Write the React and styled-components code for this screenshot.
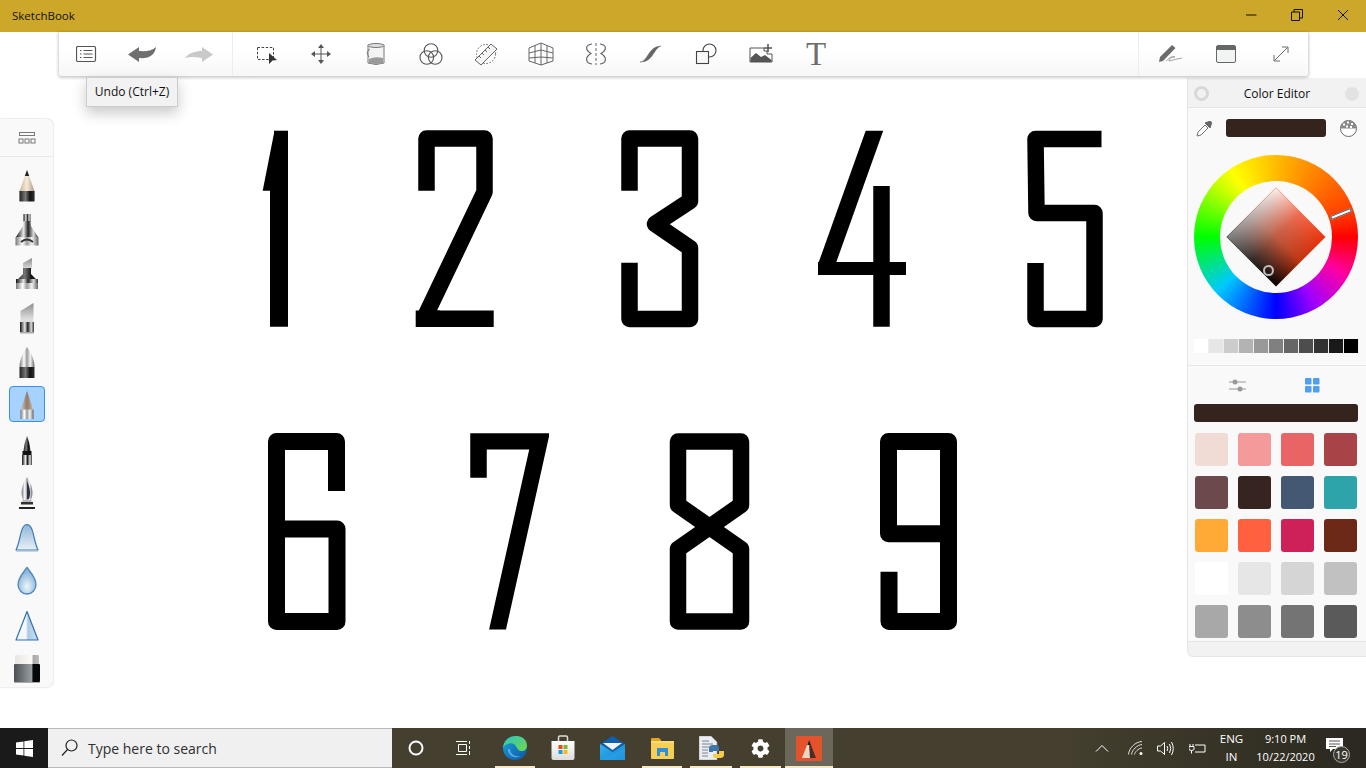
import React from 'react';
import styled, { createGlobalStyle } from 'styled-components';
import { FaCog } from 'react-icons/fa';

const Global = createGlobalStyle`
  html, body { margin: 0; padding: 0; background: #fff; overflow: hidden; }
  * { box-sizing: border-box; }
  body { font-family: "Open Sans", "Noto Sans", sans-serif; }
`;

const Page = styled.div`
  width: 1366px; height: 768px; display: flex; flex-direction: column; overflow: hidden; background: #fff;
`;

const TitleBar = styled.header`
  height: 32px; flex: none; background: #cca729; display: flex; align-items: center; padding: 0 0 2px 12px; color: #111; font-size: 11.5px;
`;
const AppTitle = styled.span`flex: 1;`;
const WinButton = styled.div`
  width: 46px; height: 30px; display: flex; align-items: center; justify-content: center; color: #111;
`;

const Workspace = styled.main`
  flex: 1; min-height: 0; display: grid; grid-template-columns: 53px 1fr 179px; grid-template-rows: 44px 1fr; position: relative;
`;

const ToolBar = styled.nav`
  grid-column: 1 / -1; margin: 0 58px 0 59px; position: relative; z-index: 3; display: flex; align-items: center;
  background: linear-gradient(#ffffff 40%, #f7f7f7); box-shadow: 0 1px 3px 1px rgba(0,0,0,.2); border-radius: 0 0 3px 3px;
`;
const ToolGroup = styled.div`
  display: flex; align-items: center; height: 100%; padding: ${p => p.$pad}; gap: ${p => p.$gap}px;
  border-left: ${p => p.$sep ? '1px solid #ededed' : 'none'};
  flex: ${p => p.$grow ? 1 : 'none'};
`;
const ToolSlot = styled.div`
  width: ${p => p.$w || 30}px; height: 30px; display: flex; align-items: center; justify-content: center; color: #555; flex: none;
`;
const TypeGlyph = styled.span`
  font-family: "Liberation Serif", serif; font-size: 33px; line-height: 30px; color: #6e6e6e;
`;
const Tooltip = styled.div`
  position: absolute; left: 27px; top: 45px; width: 92px; height: 30px; background: #f2f2f2; border: 1px solid #ccc; color: #111;
  font-size: 12px; padding-bottom: 2px; display: flex; align-items: center; justify-content: center; box-shadow: 0 6px 14px rgba(0,0,0,.22);
`;

const Palette = styled.aside`
  grid-column: 1; grid-row: 2; margin-top: 43px; height: 568px; background: #f9f9f9; border-radius: 0 6px 6px 0;
  box-shadow: 0 0 2px rgba(0,0,0,.25); display: flex; flex-direction: column; align-items: center; position: relative; z-index: 2;
`;
const PaletteHead = styled.div`
  width: 100%; height: 38px; flex: none; border-bottom: 1px solid #e9e9e9; display: flex; align-items: center; justify-content: center; margin-bottom: 7px;
`;
const BrushButton = styled.div`
  width: 36px; height: 36px; flex: none; display: flex; align-items: center; justify-content: center;
  margin: ${p => p.$sel ? '2px 0 6px' : '4px 0'};
  background: ${p => p.$sel ? '#a6d2ff' : 'transparent'};
  border: ${p => p.$sel ? '1px solid #3a8fe8' : 'none'}; border-radius: 4px;
`;

const CanvasArea = styled.svg`
  grid-column: 2; grid-row: 2; width: 1134px; height: 652px; display: block;
`;

const Panel = styled.aside`
  grid-column: 3; grid-row: 2; margin-top: 2px; height: 579px; background: #f9f9f9; border-left: 1px solid #e6e6e6; border-bottom: 1px solid #e6e6e6;
  border-radius: 0 0 0 6px; display: flex; flex-direction: column; position: relative; z-index: 2;
`;
const PanelHead = styled.div`
  height: 30px; flex: none; background: #f2f2f2; border-bottom: 1px solid #e6e6e6; display: flex; align-items: center; justify-content: space-between; padding: 2px 7px 0 6px; font-size: 12px; color: #111;
`;
const HeadRing = styled.div`
  width: 15px; height: 15px; border-radius: 50%; border: 3px solid #d8d8d8;
`;
const HeadDot = styled.div`
  width: 14px; height: 14px; border-radius: 50%; background: #e3e3e3;
`;
const ColorRow = styled.div`
  display: flex; align-items: center; margin-top: 11px; height: 18px; padding-left: 8px; gap: 14px;
`;
const CurrentColor = styled.div`
  width: 100px; height: 18px; background: #35241e; border-radius: 3px; margin-left: -1px;
`;
const Wheel = styled.div`
  width: 164px; height: 164px; margin: 18px 0 0 6px; flex: none; position: relative; border-radius: 50%;
  background: conic-gradient(from 90deg, #ff0000 0deg, #ff00a0 28deg, #a000ff 60deg, #0000ff 90deg, #00c8ff 137deg, #00ff00 180deg, #c8ff00 222deg, #ffff00 236deg, #ffa800 280deg, #ff4000 340deg, #ff0000 360deg);
`;
const WheelHole = styled.div`
  position: absolute; inset: 26px; border-radius: 50%; background: #f9f9f9;
`;
const Diamond = styled.div`
  position: absolute; left: 47px; top: 47px; width: 70px; height: 70px; transform: rotate(45deg);
  background: linear-gradient(#f0340c, #c03410 50%, #000);
  &::after { content: ''; position: absolute; inset: 0; background: linear-gradient(#fbf4f2, #808080);
    -webkit-mask-image: linear-gradient(to right, #000, rgba(0,0,0,.3) 50%, transparent);
    mask-image: linear-gradient(to right, #000, rgba(0,0,0,.3) 50%, transparent); }
`;
const HueMark = styled.div`
  position: absolute; left: 136px; top: 57px; width: 22px; height: 4px; background: #fff; border: 1px solid #555; transform: rotate(-22deg);
`;
const PickMark = styled.div`
  position: absolute; left: 69px; top: 110px; width: 11px; height: 11px; border-radius: 50%; border: 2px solid #bdbdbd;
`;
const GrayStrip = styled.div`
  display: flex; margin: 20px 0 0 6px; height: 14px; width: 165px; flex: none; background: #eee;
`;
const GrayCell = styled.div`
  flex: 1; background: ${p => p.$c}; margin-right: 1px;
`;
const Divider = styled.div`
  height: 1px; background: #e6e6e6; margin-top: 12px; flex: none;
`;
const TabRow = styled.div`
  height: 38px; flex: none; display: flex; align-items: center; padding-left: 41px; gap: 58px;
`;
const ActiveBar = styled.div`
  width: 164px; height: 18px; margin-left: 6px; background: #35241e; border-radius: 3px; flex: none;
`;
const SwatchGrid = styled.div`
  display: grid; grid-template-columns: repeat(4, 33px); gap: 10px; margin: 11px 0 0 7px;
`;
const Swatch = styled.div`
  height: 33px; border-radius: 3px; background: ${p => p.$c};
`;
const PanelFoot = styled.div`
  margin-top: auto; height: 15px; background: #f2f2f2; border-top: 1px solid #e6e6e6; border-radius: 0 0 0 6px;
`;

const TaskBar = styled.footer`
  height: 40px; flex: none; background: #443f2e; display: flex; align-items: stretch; color: #fff; position: relative;
  background-image: linear-gradient(to right, #443f2e 78%, #2a2820 100%);
`;
const StartButton = styled.div`
  width: 48px; background: #1a1a1a; display: flex; align-items: center; justify-content: center;
`;
const SearchBox = styled.div`
  width: 344px; background: #f0f0f0; border: 1px solid #b9b9b9; border-width: 1px 0; color: #2f2f2f; display: flex; align-items: center; gap: 10px; padding-left: 13px; font-size: 14px;
`;
const TaskSlot = styled.div`
  width: ${p => p.$w || 48}px; flex: none; display: flex; align-items: center; justify-content: center; position: relative;
  background: ${p => p.$active ? '#6b675a' : 'transparent'};
  &::after { content: ''; display: ${p => p.$line ? 'block' : 'none'}; position: absolute; left: ${p => p.$active ? 0 : 4}px; right: ${p => p.$active ? 0 : 4}px; bottom: 0; height: 2px; background: #f5e8c4; }
`;
const TaskGroup = styled.div`
  display: flex; flex: none; margin-left: ${p => p.$ml || 0}px;
`;
const Tray = styled.div`
  margin-left: auto; display: flex; align-items: center; font-size: 11.5px; line-height: 18px; text-align: center; flex: none; padding-right: 14px;
`;
const TraySlot = styled.div`
  width: ${p => p.$w}px; flex: none; display: flex; align-items: center; justify-content: center; flex-direction: column; position: relative; height: 40px;
  font-size: ${p => p.$fs || 11.5}px; white-space: nowrap;
`;
const NoteIcon = styled.svg`
  margin-top: -6px;
`;
const NoteBadge = styled.div`
  position: absolute; right: 2px; bottom: 5px; width: 17px; height: 17px; border-radius: 50%; background: #3c3a30; border: 1px solid #aaa; font-size: 11px; line-height: 15px; color: #fff; text-align: center;
`;
const HiddenDefs = styled.svg`
  position: absolute; width: 0; height: 0;
`;

const Defs = () => (
  <HiddenDefs aria-hidden="true">
    <defs>
      <linearGradient id="silver" x1="0" x2="1" y1="0" y2="0">
        <stop offset="0" stopColor="#777" /><stop offset=".3" stopColor="#fff" /><stop offset=".5" stopColor="#999" /><stop offset=".72" stopColor="#f4f4f4" /><stop offset="1" stopColor="#666" />
      </linearGradient>
      <linearGradient id="metal" x1="0" x2="1" y1="0" y2="0">
        <stop offset="0" stopColor="#111" /><stop offset=".35" stopColor="#e8e8e8" /><stop offset=".55" stopColor="#222" /><stop offset=".8" stopColor="#ddd" /><stop offset="1" stopColor="#333" />
      </linearGradient>
      <linearGradient id="black" x1="0" x2="1" y1="0" y2="0">
        <stop offset="0" stopColor="#222" /><stop offset=".4" stopColor="#777" /><stop offset=".7" stopColor="#111" /><stop offset="1" stopColor="#333" />
      </linearGradient>
      <linearGradient id="wood" x1="0" x2="1" y1="0" y2="0">
        <stop offset="0" stopColor="#c9b79c" /><stop offset=".5" stopColor="#f5ead8" /><stop offset="1" stopColor="#ad9a80" />
      </linearGradient>
      <linearGradient id="tan" x1="0" x2="1" y1="0" y2="0">
        <stop offset="0" stopColor="#d8c4ae" /><stop offset=".5" stopColor="#8d7d70" /><stop offset="1" stopColor="#c9b5a0" />
      </linearGradient>
      <linearGradient id="chisel" x1="0" x2="0" y1="0" y2="1">
        <stop offset="0" stopColor="#8c8c8c" /><stop offset="1" stopColor="#dedede" />
      </linearGradient>
      <linearGradient id="blueV" x1="0" x2="0" y1="0" y2="1">
        <stop offset="0" stopColor="#8fb6d8" /><stop offset="1" stopColor="#e8f0f7" />
      </linearGradient>
      <linearGradient id="blueH" x1="0" x2="1" y1="0" y2="0">
        <stop offset=".45" stopColor="#f4f8fb" /><stop offset=".55" stopColor="#a9cbe2" /><stop offset="1" stopColor="#cfe2ef" />
      </linearGradient>
      <radialGradient id="drop" cx=".5" cy=".72" r=".55">
        <stop offset="0" stopColor="#eef5fa" /><stop offset="1" stopColor="#8db8d8" />
      </radialGradient>
      <linearGradient id="eraserBody" x1="0" x2="1" y1="0" y2="0">
        <stop offset="0" stopColor="#4a5055" /><stop offset=".7" stopColor="#9aa0a4" /><stop offset=".72" stopColor="#05080c" /><stop offset="1" stopColor="#05080c" />
      </linearGradient>
      <linearGradient id="eraserTop" x1="0" x2="1" y1="0" y2="0">
        <stop offset="0" stopColor="#e8e6e0" /><stop offset=".72" stopColor="#fbfbf9" /><stop offset=".74" stopColor="#a8a8a8" /><stop offset="1" stopColor="#bbb" />
      </linearGradient>
      <linearGradient id="edgeB" x1="0" x2="1" y1="0" y2="1">
        <stop offset="0" stopColor="#1aa4d8" /><stop offset="1" stopColor="#0c55a8" />
      </linearGradient>
      <linearGradient id="edgeG" x1="0" x2="1" y1="0" y2="1">
        <stop offset="0" stopColor="#2fc5c0" /><stop offset="1" stopColor="#6fd84a" />
      </linearGradient>
      <linearGradient id="bagG" x1="0" x2="0" y1="0" y2="1">
        <stop offset="0" stopColor="#fff" /><stop offset="1" stopColor="#dcdcdc" />
      </linearGradient>
      <linearGradient id="mailG" x1="0" x2="1" y1="0" y2="1">
        <stop offset="0" stopColor="#35b5f0" /><stop offset="1" stopColor="#0e7fd0" />
      </linearGradient>
    </defs>
  </HiddenDefs>
);

const BrushSvg = ({ children }) => <svg width="36" height="40" viewBox="0 0 36 40">{children}</svg>;

const brushes = [
  <BrushSvg key="1"><path d="M18 4 L10.5 25 V35 H25.5 V25Z" fill="url(#wood)" /><path d="M18 4 L15.8 10 H20.2Z" fill="#222" /><rect x="10.5" y="25" width="15" height="10.5" fill="url(#black)" /></BrushSvg>,
  <BrushSvg key="2"><rect x="14.5" y="4" width="7" height="8" fill="url(#metal)" /><path d="M14.5 11 L14 16 L7 27 V35 H29 V27 L22 16 L21.5 11Z" fill="url(#metal)" /><rect x="6.5" y="27" width="23" height="8.5" fill="url(#silver)" /><path d="M12 32 q6 -5 12 0" stroke="#333" strokeWidth="2" fill="none" /></BrushSvg>,
  <BrushSvg key="3"><path d="M14 9 L23 4 V15 H14Z" fill="url(#chisel)" /><path d="M14 14 H22 V20 L29 27 H7 L14 20Z" fill="url(#black)" /><rect x="7" y="25" width="22" height="4" fill="url(#metal)" /><rect x="7" y="29" width="22" height="6" fill="url(#silver)" /></BrushSvg>,
  <BrushSvg key="4"><path d="M11.5 13 L24.5 5 V21 H11.5Z" fill="url(#chisel)" /><rect x="11.5" y="21" width="13" height="3" fill="#ddd" /><rect x="11" y="24" width="14" height="10" fill="url(#metal)" /><rect x="11" y="34" width="14" height="1.5" fill="#aaa" /></BrushSvg>,
  <BrushSvg key="5"><path d="M18 5 C15 9 10.5 17 10.5 25 H25.5 C25.5 17 21 9 18 5Z" fill="url(#silver)" /><rect x="10.5" y="25" width="15" height="11" fill="url(#black)" /></BrushSvg>,
  <BrushSvg key="6"><path d="M18 6 L11.5 26 H24.5Z" fill="url(#tan)" /><rect x="11" y="26" width="14" height="10" fill="url(#silver)" /></BrushSvg>,
  <BrushSvg key="7"><path d="M18 6 C16 11 15 16 14.5 21 H21.5 C21 16 20 11 18 6Z" fill="url(#black)" /><rect x="13.5" y="21" width="9" height="4" fill="#111" /><rect x="13" y="25" width="10" height="10" fill="url(#metal)" /></BrushSvg>,
  <BrushSvg key="8"><path d="M18 3 C13 10 11 19 14 26 H22 C25 19 23 10 18 3Z" fill="url(#silver)" /><path d="M18 7 C21 13 22 20 20 25 H18Z" fill="#2c3346" /><rect x="12" y="28" width="12" height="2.5" fill="#333" /><rect x="13.5" y="26" width="9" height="2" fill="#bbb" /><path d="M10 33 H26 V35 H10Z" fill="#222" /></BrushSvg>,
  <BrushSvg key="9"><path d="M7 32 C12 22 11 7 18 6.5 C25 7 24 22 29 32Z" fill="url(#blueV)" stroke="#3f7cbd" strokeWidth="1.2" strokeLinejoin="round" /><path d="M7 33 H29" stroke="#9fb4c8" strokeWidth="1" /></BrushSvg>,
  <BrushSvg key="10"><path d="M18 5.5 C22 11 27 16 27 22.5 A9 9.5 0 0 1 9 22.5 C9 16 14 11 18 5.5Z" fill="url(#drop)" stroke="#4c86c3" strokeWidth="1.3" /></BrushSvg>,
  <BrushSvg key="11"><path d="M18 5.5 L7 34 H29Z" fill="url(#blueH)" stroke="#2f6fb5" strokeWidth="1.2" strokeLinejoin="round" /></BrushSvg>,
  <BrushSvg key="12"><rect x="6" y="5" width="24" height="12" rx="1" fill="url(#eraserTop)" /><rect x="5" y="14" width="26" height="18" rx="1" fill="url(#eraserBody)" /><rect x="5" y="32" width="26" height="1" fill="#aaa" /></BrushSvg>,
];

const grays = ['#ffffff','#e6e6e6','#cccccc','#b3b3b3','#999999','#808080','#666666','#4d4d4d','#333333','#1a1a1a','#000000'];
const swatches = ['#f0dcd4','#f59a9a','#e96465','#a84447','#6b494c','#35241f','#445874','#2da4aa','#ffaa37','#ff6040','#cf2159','#6c2918','#ffffff','#e6e6e6','#d5d5d5','#c1c1c1','#a8a8a8','#8d8d8d','#747474','#5a5a5a'];

const Sketch = () => (
  <CanvasArea viewBox="53 76 1134 652">
    <defs>
      <clipPath id="clip7"><rect x="469.7" y="433.3" width="79.3" height="196.2" /></clipPath>
      <clipPath id="clip2"><rect x="415.7" y="130" width="78" height="197" /></clipPath>
      <clipPath id="clip4"><rect x="818" y="130.7" width="88" height="145" /></clipPath>
    </defs>
    <g fill="none" stroke="#000" strokeLinejoin="round">
      <path d="M279 326.7 V190" strokeWidth="18" />
      <path d="M281 190.7 V130.7" strokeWidth="14" />
      <path d="M274.5 130.7 L262.7 190.7 H275Z" fill="#000" stroke="none" />
      <g clipPath="url(#clip2)" strokeWidth="16.5">
        <path d="M426.5 190.7 V138.5 H484.5 V192 L424 318.7 H494" />
        <path d="M415 318.7 H440" />
      </g>
      <path d="M629.5 190.7 V138.5 H690 V201 L655 224 L690 248 V319 H629.5 V262.7" strokeWidth="16.5" />
      <g strokeWidth="16.5">
        <g clipPath="url(#clip4)"><path d="M876.5 125 L824 272" /></g>
        <path d="M818 268.5 H906" strokeWidth="13" />
        <path d="M881.5 326.7 V186" />
      </g>
      <path d="M1101.5 139 H1035.5 L1036.5 213 H1094.5 V319 H1035.5 V263" strokeWidth="16.5" />
      <path d="M336.5 491 V441.5 H276.5 V621.5 H337 V529 H276.5" strokeWidth="17" />
      <g clipPath="url(#clip7)" strokeWidth="16.5" strokeLinejoin="miter" strokeMiterlimit="8">
        <path d="M478.5 477.7 V441.2 H539.5 L497 632" />
      </g>
      <path d="M678 505 V441.5 H741 V505 L678 549 V621.5 H741 V549Z" strokeWidth="16.5" />
      <path d="M948.5 533.7 H888.5 V441.5 H948.5 V621.5 H889 V571.7" strokeWidth="17" />
    </g>
  </CanvasArea>
);

const Stroke = { fill: 'none', stroke: 'currentColor', strokeWidth: 1.2 };

const App = () => (
  <Page>
    <Global />
    <Defs />
    <TitleBar>
      <AppTitle>SketchBook</AppTitle>
      <WinButton><svg width="11" height="2"><path d="M0 1H10.5" stroke="#111" /></svg></WinButton>
      <WinButton><svg width="12" height="12" fill="none" stroke="#111"><path d="M.5 3H8.5V11.5H.5Z M3 3V.5H11.5V9H8.5" /></svg></WinButton>
      <WinButton><svg width="12" height="12" stroke="#111"><path d="M1 1L11 11M11 1L1 11" /></svg></WinButton>
    </TitleBar>

    <Workspace>
      <ToolBar>
        <ToolGroup $pad="0 19px 0 12px" $gap={26}>
          <ToolSlot><svg width="21" height="17"><rect x=".5" y=".5" width="19" height="15" rx="1.5" {...Stroke} stroke="#555" /><path d="M4 4.5H5.5M4 8H5.5M4 11.5H5.5M7.5 4.5H16.5M7.5 8H16.5M7.5 11.5H16.5" stroke="#555" strokeWidth="1.1" /></svg></ToolSlot>
          <ToolSlot><svg width="29" height="17"><path d="M0 8.5 L11 1 V5 C18 5.5 24 5 28 1 C27 9 21 13 11 12 V16Z" fill="#6f6f6f" /></svg></ToolSlot>
          <ToolSlot><svg width="29" height="17"><path d="M29 8.5 L18 1 V5 C11 5 5 7 1 12 C6 10.5 12 11 18 12 V16Z" fill="#c9c9c9" /></svg></ToolSlot>
        </ToolGroup>
        <ToolGroup $sep $grow $pad="0 0 0 18px" $gap={25}>
          <ToolSlot><svg width="24" height="22"><rect x="3.5" y="4.5" width="16" height="12" fill="none" stroke="#444" strokeDasharray="2.5 1.6" /><path d="M15 10 L23 17 L18.5 17.5 L15 21Z" fill="#333" /></svg></ToolSlot>
          <ToolSlot><svg width="22" height="22" fill="#555" stroke="#555"><path d="M11 4V18M4 11H18" strokeWidth="1" /><path d="M11 1L8 5H14ZM11 21L8 17H14ZM1 11L5 8V14ZM21 11L17 8V14Z" stroke="none" /></svg></ToolSlot>
          <ToolSlot><svg width="20" height="24"><path d="M2 3 H18 V21 Q10 24 2 21Z" fill="#f4f4f4" stroke="#777" /><ellipse cx="10" cy="3.5" rx="8" ry="2" fill="#ddd" stroke="#777" /><path d="M3 21 V17 Q9 14 17 16 V21 Q10 23 3 21Z" fill="#9a9a9a" /><path d="M3 15 Q-1 10 4 7" fill="none" stroke="#777" /></svg></ToolSlot>
          <ToolSlot><svg width="24" height="24" fill="none" stroke="#555" strokeWidth="1.1"><circle cx="12" cy="8.5" r="6.8" /><circle cx="7.8" cy="15.5" r="6.8" /><circle cx="16.2" cy="15.5" r="6.8" /></svg></ToolSlot>
          <ToolSlot><svg width="24" height="24" fill="none" stroke="#666"><circle cx="12" cy="12" r="9.5" strokeDasharray="1.6 1.6" /><path d="M1 18 L17 2 L23 7 L7 23Z" fill="#f4f4f4" /><path d="M5 14l2 2M8 11l2 2M11 8l2 2M14 5l2 2" /></svg></ToolSlot>
          <ToolSlot><svg width="26" height="24" fill="none" stroke="#666" strokeWidth="1"><path d="M13 1 L25 6 V19 L13 23 L1 19 V6Z M13 1V23 M7 3.5V21 M19 3.5V21 M1 11 L13 8 L25 11 M1 16 L13 15 L25 16" /></svg></ToolSlot>
          <ToolSlot><svg width="24" height="24" fill="none" stroke="#666"><path d="M12 1V23" strokeDasharray="3 2" /><path d="M8 2 C1 3 1 8 7 11.5 C1 15 1 21 8 22" strokeWidth="1.2" /><path d="M16 2 C23 3 23 8 17 11.5 C23 15 23 21 16 22" strokeWidth="1.2" /></svg></ToolSlot>
          <ToolSlot><svg width="22" height="18"><path d="M0 17 C8 17 8 1 21 1 C14 3 13 17 1 17Z" fill="#666" stroke="#666" strokeWidth=".4" /></svg></ToolSlot>
          <ToolSlot><svg width="22" height="22" fill="none" stroke="#444" strokeWidth="1.1"><circle cx="14.5" cy="7.5" r="6.5" /><rect x="1.5" y="8.5" width="12" height="12" fill="#f8f8f8" /></svg></ToolSlot>
          <ToolSlot><svg width="24" height="22"><path d="M1 5 H15 V8 H18 V11 H23 V19 H1Z" fill="#fff" stroke="#555" strokeWidth="1" /><path d="M1.5 19 V15 L7 10 L12 14 L16 12 L22.5 17 V19Z" fill="#555" /><path d="M19 1V9M15 5H23" stroke="#555" strokeWidth="1.6" /></svg></ToolSlot>
          <ToolSlot><TypeGlyph>T</TypeGlyph></ToolSlot>
        </ToolGroup>
        <ToolGroup $sep $pad="0 12px 0 17px" $gap={25}>
          <ToolSlot><svg width="26" height="20"><path d="M1 18 L2 13 L14 1 L17.5 4 L5 17Z" fill="#6c6c6c" /><path d="M8 17 Q14 11 17 13 Q11 13 11 17 Q18 15 24 14" fill="none" stroke="#999" strokeWidth=".9" /></svg></ToolSlot>
          <ToolSlot><svg width="20" height="18"><rect x=".5" y=".5" width="19" height="17" rx="1.5" fill="#f2f4f4" stroke="#666" /><path d="M1 1H19V5H1Z" fill="#666" /></svg></ToolSlot>
          <ToolSlot><svg width="16" height="16" fill="none" stroke="#6a6a6a"><path d="M1 9V15H7M15 7V1H9M1.5 14.5L14.5 1.5" /></svg></ToolSlot>
        </ToolGroup>
        <Tooltip>Undo (Ctrl+Z)</Tooltip>
      </ToolBar>

      <Palette>
        <PaletteHead>
          <svg width="18" height="13" fill="none" stroke="#777"><rect x="1.5" y="1.5" width="15" height="3" /><rect x="1" y="8" width="4" height="4" /><rect x="7" y="8" width="4" height="4" /><rect x="13" y="8" width="4" height="4" /></svg>
        </PaletteHead>
        {brushes.map((b, i) => <BrushButton key={i} $sel={i === 5}>{b}</BrushButton>)}
      </Palette>

      <Sketch />

      <Panel>
        <PanelHead><HeadRing />Color Editor<HeadDot /></PanelHead>
        <ColorRow>
          <svg width="17" height="17" fill="none" stroke="#777"><path d="M1 16 L2 12 L9 5 L12 8 L5 15Z" fill="#fbfbfb" /><path d="M9 3 L14 8 L15 5 Q17 1 13 1.5Z" fill="#666" stroke="#666" /></svg>
          <CurrentColor />
          <svg width="17" height="17"><circle cx="8.5" cy="8.5" r="8" fill="#fff" stroke="#666" /><path d="M.5 8.5 A8 8 0 0 1 16.5 8.5Z" fill="#888" /><path d="M3 3.5h2v2H3zM7 1.5h2v2H7zM11 3h2v2h-2zM6 5.5h2v2H6zM10 6h2v2h-2z" fill="#fff" /></svg>
        </ColorRow>
        <Wheel>
          <WheelHole />
          <Diamond />
          <HueMark />
          <PickMark />
        </Wheel>
        <GrayStrip>{grays.map(c => <GrayCell key={c} $c={c} />)}</GrayStrip>
        <Divider />
        <TabRow>
          <svg width="18" height="13" fill="#9a9a9a" stroke="#9a9a9a"><path d="M0 3H17M0 10H17" strokeWidth="1" /><circle cx="6" cy="3" r="2.5" stroke="none" /><circle cx="11" cy="10" r="2.5" stroke="none" /></svg>
          <svg width="15" height="15" fill="#4f9fee"><rect width="6.5" height="6.5" rx=".8" /><rect x="8" width="6.5" height="6.5" rx=".8" /><rect y="8" width="6.5" height="6.5" rx=".8" /><rect x="8" y="8" width="6.5" height="6.5" rx=".8" /></svg>
        </TabRow>
        <ActiveBar />
        <SwatchGrid>{swatches.map((c, i) => <Swatch key={i} $c={c} />)}</SwatchGrid>
        <PanelFoot />
      </Panel>
    </Workspace>

    <TaskBar>
      <StartButton>
        <svg width="17" height="17" fill="#fff"><path d="M0 2.5L7.5 1.4V8H0ZM8.3 1.3L17 0V8H8.3ZM0 9H7.5V15.6L0 14.5ZM8.3 9H17V17L8.3 15.7Z" /></svg>
      </StartButton>
      <SearchBox>
        <svg width="17" height="18" fill="none" stroke="#222" strokeWidth="1.2"><circle cx="10.5" cy="6.5" r="5.5" /><path d="M6.5 10.5L1 16.5" /></svg>
        Type here to search
      </SearchBox>
      <TaskGroup>
        <TaskSlot><svg width="16" height="16" fill="none" stroke="#fff" strokeWidth="2"><circle cx="8" cy="8" r="6.5" /></svg></TaskSlot>
        <TaskSlot><svg width="16" height="14" fill="none" stroke="#fff"><path d="M0 .5H11M0 13.5H11M2.5 3.5H10.5V10.5H2.5ZM13.5 0V3M13.5 5V8M13.5 10V14" /></svg></TaskSlot>
      </TaskGroup>
      <TaskGroup $ml={3}>
        <TaskSlot $line><svg width="26" height="26"><circle cx="13" cy="13" r="12" fill="url(#edgeB)" /><path d="M1 13 C2 3 13 -2 21 3 C26 6 26.5 15 21 16 C15 17 15 11 12 9 C7 7 2 10 1 13Z" fill="url(#edgeG)" /><path d="M8 14 C8 20 14 22 19 21 C14 24 6 22 6 14 Z" fill="#8ad0ef" opacity=".6" /></svg></TaskSlot>
        <TaskSlot><svg width="24" height="26"><path d="M7.5 6 V2.5 Q7.5 1 9 1 H15 Q16.5 1 16.5 2.5 V6" fill="none" stroke="#ddd" strokeWidth="1.5" /><path d="M.5 6 H23.5 V23 Q23.5 25 21.5 25 H2.5 Q.5 25 .5 23Z" fill="url(#bagG)" /><rect x="7.5" y="10" width="4" height="4" fill="#e8491f" /><rect x="12.5" y="10" width="4" height="4" fill="#7ab92c" /><rect x="7.5" y="15" width="4" height="4" fill="#1a9fe5" /><rect x="12.5" y="15" width="4" height="4" fill="#fdb813" /></svg></TaskSlot>
        <TaskSlot $w={51}><svg width="25" height="24"><path d="M12.5 0 L25 8 L12.5 16 L0 8Z" fill="#0d5fb0" /><path d="M3 7 H22 L12.5 14Z" fill="#f4f4f4" /><path d="M0 8 L12.5 16 L25 8 V24 H0Z" fill="url(#mailG)" /><path d="M0 24 L25 12 V24Z" fill="#2ba4ea" opacity=".6" /></svg></TaskSlot>
        <TaskSlot $line><svg width="23" height="21"><path d="M0 1 Q0 0 1 0 H8 L10 2 V6 H0Z" fill="#e4a51e" /><rect y="3" width="23" height="18" rx="1" fill="#f7cf55" /><path d="M0 3 H23 V5 H0Z" fill="#f9db7a" /><rect x="6" y="10" width="11" height="8" fill="#2f8fd8" /><rect x="9" y="14" width="5" height="5" fill="#f7cf55" /></svg></TaskSlot>
        <TaskSlot $line $w={50}><svg width="25" height="24"><path d="M0 0 H12 L18 6 V24 H0Z" fill="#e9edf2" stroke="#9aa0a8" strokeWidth=".6" /><path d="M3 5H10M3 8H14M3 11H10M3 14H9M3 17H9M3 20H9" stroke="#7c8390" /><path d="M10 16 V12 Q10 9 14 9 H17 Q20 9 20 12 V15 H14 V16Z" fill="#3f76a8" /><path d="M25 15 V19 Q25 22 21 22 H17 Q14 22 14 20 V18 H20 V15Z" fill="#f5cc4a" /></svg></TaskSlot>
        <TaskSlot $line $w={49}><FaCog size={19} color="#fff" /></TaskSlot>
        <TaskSlot $line $active $w={48}><svg width="26" height="25"><rect width="26" height="25" fill="#e5532d" /><path d="M13 4 L6 22 H14Z" fill="#ecd8c8" /><path d="M13 4 L20 22 H14Z" fill="#4a2c24" /><path d="M13 4 L11.2 9 H14.8Z" fill="#222" /></svg></TaskSlot>
      </TaskGroup>
      <Tray>
        <TraySlot $w={51}><svg width="14" height="8" fill="none" stroke="#fff"><path d="M1 7.5L7 1.5L13 7.5" /></svg></TraySlot>
        <TraySlot $w={17}><svg width="15" height="14" fill="none" stroke="#ddd"><path d="M.5 13.5C1 7 7 1 14 .5M3.5 13.5C4 9 9 4 14 3.5M6.5 13.5C7 11 10 7.5 14 7" /><circle cx="13" cy="12.5" r="1.5" fill="#fff" stroke="none" /></svg></TraySlot>
        <TraySlot $w={43}><svg width="17" height="15" fill="none" stroke="#fff"><path d="M.5 5H3.5L7.5 1.5V13.5L3.5 10H.5Z" /><path d="M10 5Q11.5 7.5 10 10M12.5 3Q15 7.5 12.5 12M14.5 1Q18 7.5 14.5 14" /></svg></TraySlot>
        <TraySlot $w={21}><svg width="17" height="11" fill="none" stroke="#fff"><path d="M6 2H16V9H6" /><path d="M1 1V3.5M4 1V3.5M0 3.5H5V6Q5 7.5 2.5 7.5Q0 7.5 0 6ZM2.5 7.5V10.5" /></svg></TraySlot>
        <TraySlot $w={47}><span>ENG</span><span>IN</span></TraySlot>
        <TraySlot $w={61} $fs={11}><span>9:10 PM</span><span>10/22/2020</span></TraySlot>
        <TraySlot $w={36}>
          <NoteIcon width="17" height="14" fill="#fff"><path d="M0 0H17V11H7L4 14V11H0Z" /><path d="M3 3H14M3 6H14M3 8.5H10" stroke="#555" /></NoteIcon>
          <NoteBadge>19</NoteBadge>
        </TraySlot>
      </Tray>
    </TaskBar>
  </Page>
);

export default App;
